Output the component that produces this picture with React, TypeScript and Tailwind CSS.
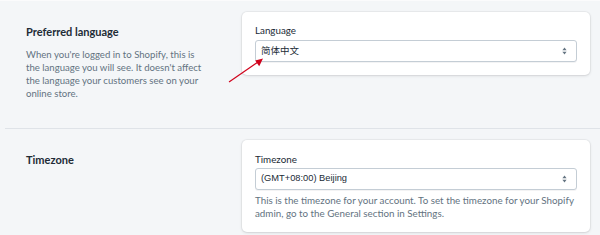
import React from 'react';

const FONT = { fontFamily: 'Lato, "Noto Sans", "Noto Sans CJK SC", sans-serif' };

function Chevron() {
  return (
    <svg width="5" height="8" viewBox="0 0 5 8" className="shrink-0">
      <path d="M2.5 0.5 L4.6 3.2 H0.4 Z" fill="#637381" />
      <path d="M2.5 7.5 L4.6 4.8 H0.4 Z" fill="#637381" />
    </svg>
  );
}

function SelectBox({ value, native }: { value: string; native?: boolean }) {
  return (
    <div className="h-[22px] flex items-center justify-between pl-[5px] pr-[9px] bg-white border border-[#c4cdd5] rounded-[3px] shadow-[0_1px_0_rgba(22,29,37,0.05)]">
      <span
        className={native ? 'text-[9.3px] text-[#212b36] leading-none' : 'text-[9.5px] text-[#212b36] leading-none'}
        style={native ? { fontFamily: '"Liberation Sans", Arial, sans-serif' } : { fontFamily: '"Noto Sans CJK SC", sans-serif' }}
      >
        {value}
      </span>
      <Chevron />
    </div>
  );
}

function Section({
  title,
  desc,
  children,
}: {
  title: string;
  desc?: string;
  children: React.ReactNode;
}) {
  return (
    <div className="flex items-start pl-[26px] pr-[10px] pt-[11px]">
      <div className="w-[216px] shrink-0 pt-[12px]">
        <h2 className="text-[11px] font-bold text-[#212b36] leading-[16px]">{title}</h2>
        {desc && (
          <p className="mt-[8px] w-[182px] text-[9.6px] leading-[13px] text-[#637381]">{desc}</p>
        )}
      </div>
      <div className="flex-1 bg-white rounded-[5px] shadow-[0_0_0_1px_rgba(63,63,68,0.05),0_1px_3px_rgba(63,63,68,0.15)] px-[13px]">
        {children}
      </div>
    </div>
  );
}

export default function App() {
  return (
    <div className="relative w-[600px] h-[235px] bg-[#f4f6f8] overflow-hidden" style={FONT}>
      <div className="h-[1px] bg-[#fbfbfc]" />
      <div className="h-[127px]">
        <Section
          title="Preferred language"
          desc="When you're logged in to Shopify, this is the language you will see. It doesn't affect the language your customers see on your online store."
        >
          <div className="pt-[12px] pb-[13px]">
            <div className="text-[9.8px] leading-[13px] text-[#212b36] mb-[3px]">Language</div>
            <SelectBox value="简体中文" />
          </div>
        </Section>
      </div>
      <div className="ml-[5px] h-px bg-[#dfe3e8]" />
      <Section title="Timezone">
        <div className="pt-[13px] pb-[12px]">
          <div className="text-[9.8px] leading-[13px] text-[#212b36] mb-[2px]">Timezone</div>
          <SelectBox value="(GMT+08:00) Beijing" native />
          <p className="mt-[4px] text-[9.8px] leading-[13px] text-[#637381]">
            This is the timezone for your account. To set the timezone for your Shopify admin, go to the General section in Settings.
          </p>
        </div>
      </Section>

      <svg className="absolute left-0 top-0 pointer-events-none" width="600" height="235">
        <line x1="229" y1="82" x2="258" y2="62" stroke="#d0021b" strokeWidth="1.2" />
        <path d="M263 58.5 L255.2 60.4 L259.2 66.2 Z" fill="#d0021b" />
      </svg>
    </div>
  );
}
